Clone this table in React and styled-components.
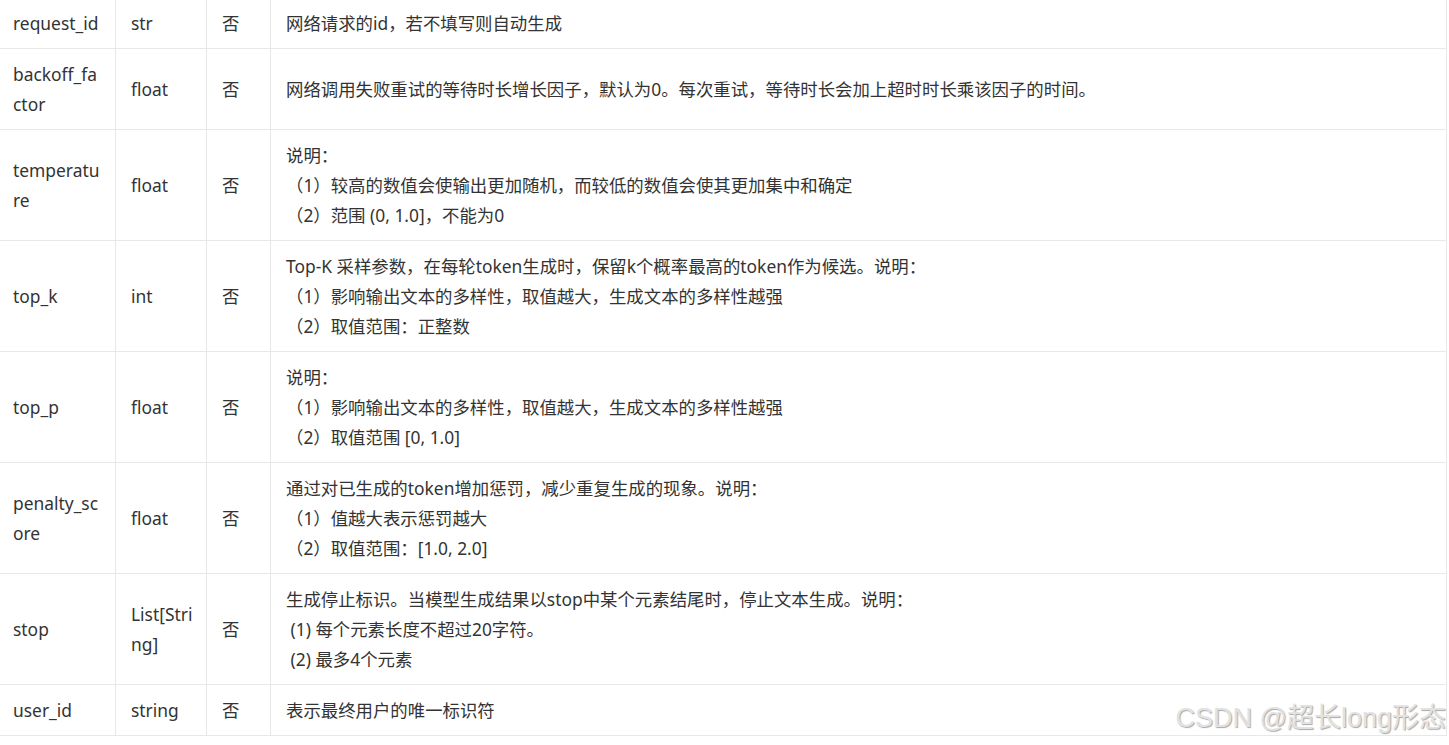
import styled, { createGlobalStyle } from "styled-components";

const GlobalStyle = createGlobalStyle`
  html, body {
    margin: 0;
    padding: 0;
    background: #fff;
    overflow: hidden;
  }
`;

const Page = styled.div`
  position: relative;
  width: 1449px;
  height: 745px;
  overflow: hidden;
`;

const Table = styled.table`
  width: 1450px;
  margin: -3px 0 0 -3px;
  border-collapse: collapse;
  table-layout: fixed;
  font-family: "Noto Sans", "Noto Sans CJK SC", sans-serif;
  font-size: 17.4px;
  line-height: 30px;
  color: #333;
`;

const Cell = styled.td`
  border: 1px solid #e8e8e8;
  padding: 10px 15px;
  vertical-align: middle;
  text-align: left;
  word-break: break-all;
`;

const Line = styled.div`
  white-space: pre;
`;

const Watermark = styled.div`
  position: absolute;
  right: 3px;
  bottom: 12px;
  font-family: "Liberation Sans", "Noto Sans CJK SC", sans-serif;
  font-size: 27px;
  line-height: 30px;
  color: #e2e2e2;
  text-shadow: 1px 1px 1px #a8a8a8;
  pointer-events: none;
`;

const rows = [
  { name: ["request_id"], type: ["str"], desc: ["网络请求的id，若不填写则自动生成"] },
  {
    name: ["backoff_fa", "ctor"],
    type: ["float"],
    desc: ["网络调用失败重试的等待时长增长因子，默认为0。每次重试，等待时长会加上超时时长乘该因子的时间。"],
  },
  {
    name: ["temperatu", "re"],
    type: ["float"],
    desc: ["说明：", "（1）较高的数值会使输出更加随机，而较低的数值会使其更加集中和确定", "（2）范围 (0, 1.0]，不能为0"],
  },
  {
    name: ["top_k"],
    type: ["int"],
    desc: [
      "Top-K 采样参数，在每轮token生成时，保留k个概率最高的token作为候选。说明：",
      "（1）影响输出文本的多样性，取值越大，生成文本的多样性越强",
      "（2）取值范围：正整数",
    ],
  },
  {
    name: ["top_p"],
    type: ["float"],
    desc: ["说明：", "（1）影响输出文本的多样性，取值越大，生成文本的多样性越强", "（2）取值范围 [0, 1.0]"],
  },
  {
    name: ["penalty_sc", "ore"],
    type: ["float"],
    desc: ["通过对已生成的token增加惩罚，减少重复生成的现象。说明：", "（1）值越大表示惩罚越大", "（2）取值范围：[1.0, 2.0]"],
  },
  {
    name: ["stop"],
    type: ["List[Stri", "ng]"],
    desc: [
      "生成停止标识。当模型生成结果以stop中某个元素结尾时，停止文本生成。说明：",
      " (1) 每个元素长度不超过20字符。",
      " (2) 最多4个元素",
    ],
  },
  { name: ["user_id"], type: ["string"], desc: ["表示最终用户的唯一标识符"] },
];

function Lines({ items }) {
  return items.map((t, i) => <Line key={i}>{t}</Line>);
}

export default function App() {
  return (
    <Page>
      <GlobalStyle />
      <Table>
        <colgroup>
          <col style={{ width: 118 }} />
          <col style={{ width: 91 }} />
          <col style={{ width: 64 }} />
          <col />
        </colgroup>
        <tbody>
          {rows.map((r, i) => (
            <tr key={i}>
              <Cell>
                <Lines items={r.name} />
              </Cell>
              <Cell>
                <Lines items={r.type} />
              </Cell>
              <Cell>否</Cell>
              <Cell>
                <Lines items={r.desc} />
              </Cell>
            </tr>
          ))}
        </tbody>
      </Table>
      <Watermark>CSDN @超长long形态</Watermark>
    </Page>
  );
}
